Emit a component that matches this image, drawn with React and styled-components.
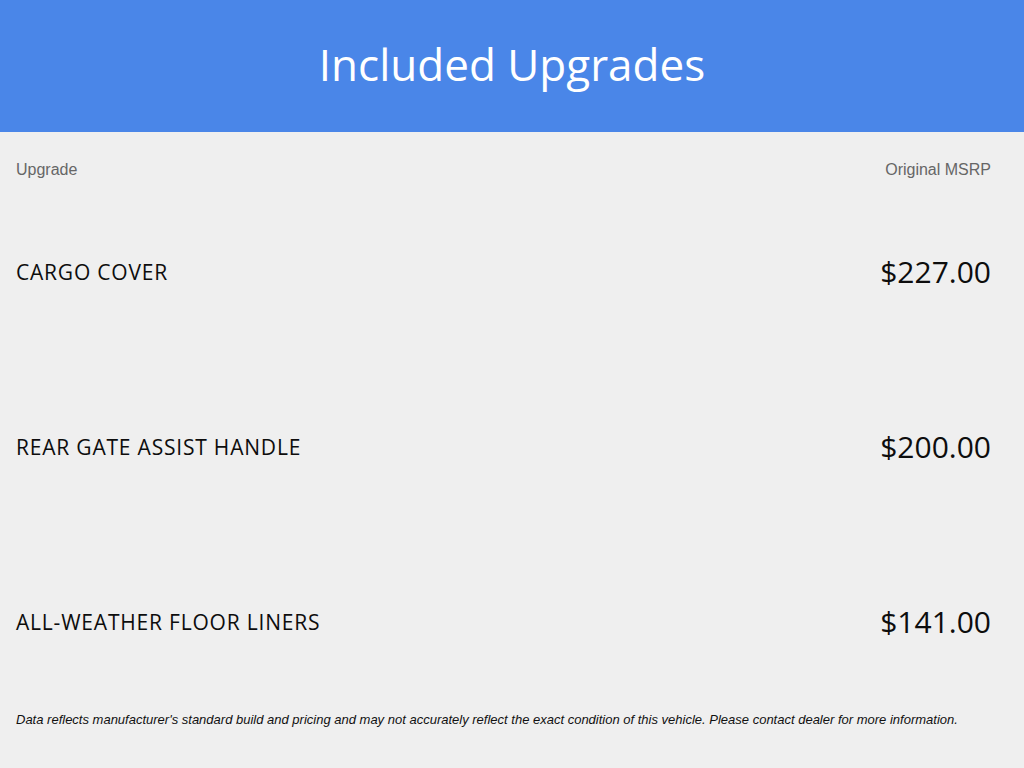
import React from 'react'
import styled, { createGlobalStyle } from 'styled-components'

const GlobalStyle = createGlobalStyle`
  body {
    margin: 0;
    background: #efefef;
    font-family: "Open Sans", "Liberation Sans", sans-serif;
  }
`

const Page = styled.div`
  display: flex;
  flex-direction: column;
  min-height: 768px;
  background: #efefef;
`

const Header = styled.header`
  height: 132px;
  background: #4a86e8;
  display: flex;
  align-items: center;
  justify-content: center;
`

const Title = styled.h1`
  margin: 0 0 4px;
  font-family: "Open Sans", sans-serif;
  font-weight: 400;
  font-size: 44px;
  line-height: 56px;
  color: #ffffff;
`

const Table = styled.div`
  padding: 0 33px 0 16px;
`

const ColumnHeader = styled.div`
  display: flex;
  justify-content: space-between;
  height: 52px;
  padding-top: 28px;
  box-sizing: border-box;
  font-family: "Liberation Sans", Arial, sans-serif;
  font-size: 16px;
  line-height: 20px;
  color: #666666;
`

const Row = styled.div`
  display: flex;
  justify-content: space-between;
  align-items: center;
  height: 175px;
`

const Name = styled.div`
  font-size: 21px;
  letter-spacing: 0.8px;
  color: #0d0d0d;
  text-transform: uppercase;
`

const Price = styled.div`
  font-size: 30px;
  color: #0d0d0d;
`

const Disclaimer = styled.p`
  margin: 3px 0 0;
  padding: 0 16px;
  font-family: "Liberation Sans", Arial, sans-serif;
  font-style: italic;
  font-size: 13px;
  line-height: 16px;
  color: #111111;
`

const upgrades = [
  { name: 'Cargo Cover', price: '$227.00' },
  { name: 'Rear Gate Assist Handle', price: '$200.00' },
  { name: 'All-Weather Floor Liners', price: '$141.00' },
]

export default function App() {
  return (
    <Page>
      <GlobalStyle />
      <Header>
        <Title>Included Upgrades</Title>
      </Header>
      <Table>
        <ColumnHeader>
          <span>Upgrade</span>
          <span>Original MSRP</span>
        </ColumnHeader>
        {upgrades.map((u) => (
          <Row key={u.name}>
            <Name>{u.name}</Name>
            <Price>{u.price}</Price>
          </Row>
        ))}
      </Table>
      <Disclaimer>
        Data reflects manufacturer's standard build and pricing and may not accurately reflect the exact condition of this vehicle. Please contact dealer for more information.
      </Disclaimer>
    </Page>
  )
}
